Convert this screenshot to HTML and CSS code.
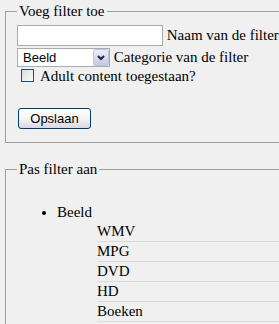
FILE: index.html
```html
<!DOCTYPE html>
<html lang="nl">
<head>
    <meta charset="UTF-8">
    <title>Filters</title>
    <link rel="stylesheet" href="styles.css">
</head>
<body>
    <form class="page">
        <!-- Nieuwe filter -->
        <fieldset class="group group-add">
            <legend>Voeg filter toe</legend>
            <div class="row row-name">
                <input type="text" class="field"> Naam van de filter
            </div>
            <div class="row row-cat">
                <span class="select">
                    <select class="dropdown">
                        <option>Beeld</option>
                        <option>Boeken</option>
                    </select>
                    <span class="select-btn">
                        <svg width="8" height="6" viewBox="0 0 8 6"><path d="M1 1 L4 4 L7 1" fill="none" stroke="#23233a" stroke-width="2"/></svg>
                    </span>
                </span> Categorie van de filter
            </div>
            <div class="row row-adult">
                <input type="checkbox" class="check"> Adult content toegestaan?
            </div>
            <div class="row row-submit">
                <button type="button" class="submit">Opslaan</button>
            </div>
        </fieldset>

        <!-- Bestaande filters -->
        <fieldset class="group group-edit">
            <legend>Pas filter aan</legend>
            <ul class="tree">
                <li>Beeld
                    <ul class="sub">
                        <li>WMV</li>
                        <li>MPG</li>
                        <li>DVD</li>
                        <li>HD</li>
                        <li>Boeken</li>
                    </ul>
                </li>
            </ul>
        </fieldset>
    </form>
</body>
</html>
```

FILE: styles.css
```css
body {
    margin: 0;
    background: #f0f0f0;
    color: #000;
    font-family: 'Liberation Serif', 'Times New Roman', serif;
    font-size: 15px;
    overflow: hidden;
}

.page {
    margin: 0;
    padding-top: 2px;
}

/* Fieldsets */
.group {
    width: 420px;
    margin: 0 0 0 5px;
    padding: 5px 11px 13px 11px;
    border: 1px solid #a0a0a0;
}

.group legend {
    padding: 0 2px;
    line-height: 18px;
}

.group-edit {
    margin-top: 17px;
}

/* Form rows */
.row {
    line-height: 19px;
}

.row-cat {
    margin-top: 2px;
}

.row-submit {
    margin-top: 22px;
}

.field {
    width: 146px;
    height: 21px;
    box-sizing: border-box;
    margin: 0;
    padding: 2px 3px;
    border: 1px solid #a5acb2;
    background: #fff;
    font-family: 'Liberation Sans', Arial, sans-serif;
    font-size: 13px;
    vertical-align: baseline;
}

.select {
    position: relative;
    display: inline-block;
    vertical-align: baseline;
}

.dropdown {
    -webkit-appearance: none;
    appearance: none;
    width: 93px;
    height: 19px;
    box-sizing: border-box;
    margin: 0;
    padding: 0 0 0 5px;
    border: 1px solid #a5acb2;
    border-radius: 0;
    background: #fff;
    color: #000;
    font-family: 'Liberation Sans', Arial, sans-serif;
    font-size: 13px;
    line-height: 17px;
    display: block;
}

.select-btn {
    position: absolute;
    top: 1px;
    right: 1px;
    width: 16px;
    height: 17px;
    box-sizing: border-box;
    border: 1px solid #bcc3dc;
    border-radius: 2px;
    background: linear-gradient(#eceef8, #c4c9e2);
    display: flex;
    align-items: center;
    justify-content: center;
}

.check {
    -webkit-appearance: none;
    appearance: none;
    box-sizing: border-box;
    width: 13px;
    height: 13px;
    margin: 0 3px 0 4px;
    border: 1px solid #1c5180;
    background: linear-gradient(135deg, #dcdcd7, #fbfbf9);
    vertical-align: -1px;
}

.submit {
    height: 21px;
    width: 73px;
    margin: 0 0 0 1px;
    padding: 0;
    border: 1px solid #003c74;
    border-radius: 3px;
    background: linear-gradient(#ffffff, #f3f3ef 55%, #d6d7e4);
    color: #000;
    font-family: 'Liberation Sans', Arial, sans-serif;
    font-size: 13px;
}

/* Filter tree */
.tree {
    margin: 20px 0 0 0;
    padding-left: 40px;
    line-height: 19px;
}

.sub {
    margin: 0;
    padding-left: 40px;
    list-style: none;
}

.sub li {
    border-bottom: 1px solid #dadada;
}
```
